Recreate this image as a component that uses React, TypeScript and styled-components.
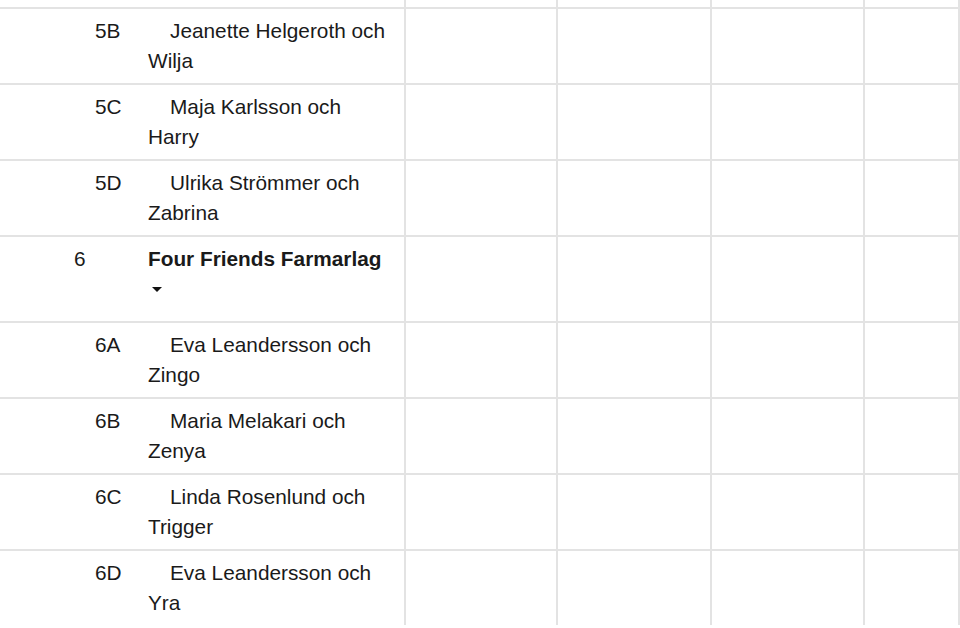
import React from "react";
import styled, { createGlobalStyle } from "styled-components";

const Global = createGlobalStyle`
  html, body { margin: 0; padding: 0; background: #ffffff; overflow: hidden; }
  body { font-family: "Liberation Sans", Arial, sans-serif; color: #1a1a1a; }
`;

const LINE = "#e3e3e3";

const Table = styled.div`
  width: 960px;
  height: 625px;
  overflow: hidden;
  display: flex;
  flex-direction: column;
`;

const Row = styled.div<{ $h?: number }>`
  display: grid;
  grid-template-columns: 140px 264px 152px 154px 153px 95px 2px;
  border-bottom: 2px solid ${LINE};
  min-height: ${(p) => (p.$h ? `${p.$h}px` : "auto")};
  flex-shrink: 0;
`;

const NumCell = styled.div<{ $sub?: boolean }>`
  padding: 7px 0 7px ${(p) => (p.$sub ? "95px" : "74px")};
  font-size: 20.8px;
  line-height: 30px;
  white-space: nowrap;
`;

const NameCell = styled.div<{ $bold?: boolean; $sub?: boolean }>`
  padding: 7px 12px 7px 8px;
  font-size: 20.8px;
  line-height: 30px;
  font-weight: ${(p) => (p.$bold ? 700 : 400)};
  text-indent: ${(p) => (p.$sub ? "22px" : "0")};
`;

const EmptyCell = styled.div`
  border-left: 2px solid ${LINE};
`;

const Caret = styled.div`
  height: 40px;
  display: flex;
  align-items: flex-start;
  padding-top: 13px;
  box-sizing: border-box;
  &::before {
    content: "";
    margin-left: 4px;
    width: 0;
    height: 0;
    border-left: 5px solid transparent;
    border-right: 5px solid transparent;
    border-top: 5px solid #111;
  }
`;

type Entry = { num: string; name: string; team?: boolean };

const entries: Entry[] = [
  { num: "5B", name: "Jeanette Helgeroth och Wilja" },
  { num: "5C", name: "Maja Karlsson och Harry" },
  { num: "5D", name: "Ulrika Strömmer och Zabrina" },
  { num: "6", name: "Four Friends Farmarlag", team: true },
  { num: "6A", name: "Eva Leandersson och Zingo" },
  { num: "6B", name: "Maria Melakari och Zenya" },
  { num: "6C", name: "Linda Rosenlund och Trigger" },
  { num: "6D", name: "Eva Leandersson och Yra" },
];

const Blanks = () => (
  <>
    <EmptyCell />
    <EmptyCell />
    <EmptyCell />
    <EmptyCell />
    <EmptyCell />
  </>
);

export default function App() {
  return (
    <>
      <Global />
      <Table>
        <Row $h={7}>
          <div />
          <div />
          <Blanks />
        </Row>
        {entries.map((e) => (
          <Row key={e.num}>
            <NumCell $sub={!e.team}>{e.num}</NumCell>
            <NameCell $bold={e.team} $sub={!e.team}>
              {e.name}
              {e.team && <Caret />}
            </NameCell>
            <Blanks />
          </Row>
        ))}
      </Table>
    </>
  );
}
